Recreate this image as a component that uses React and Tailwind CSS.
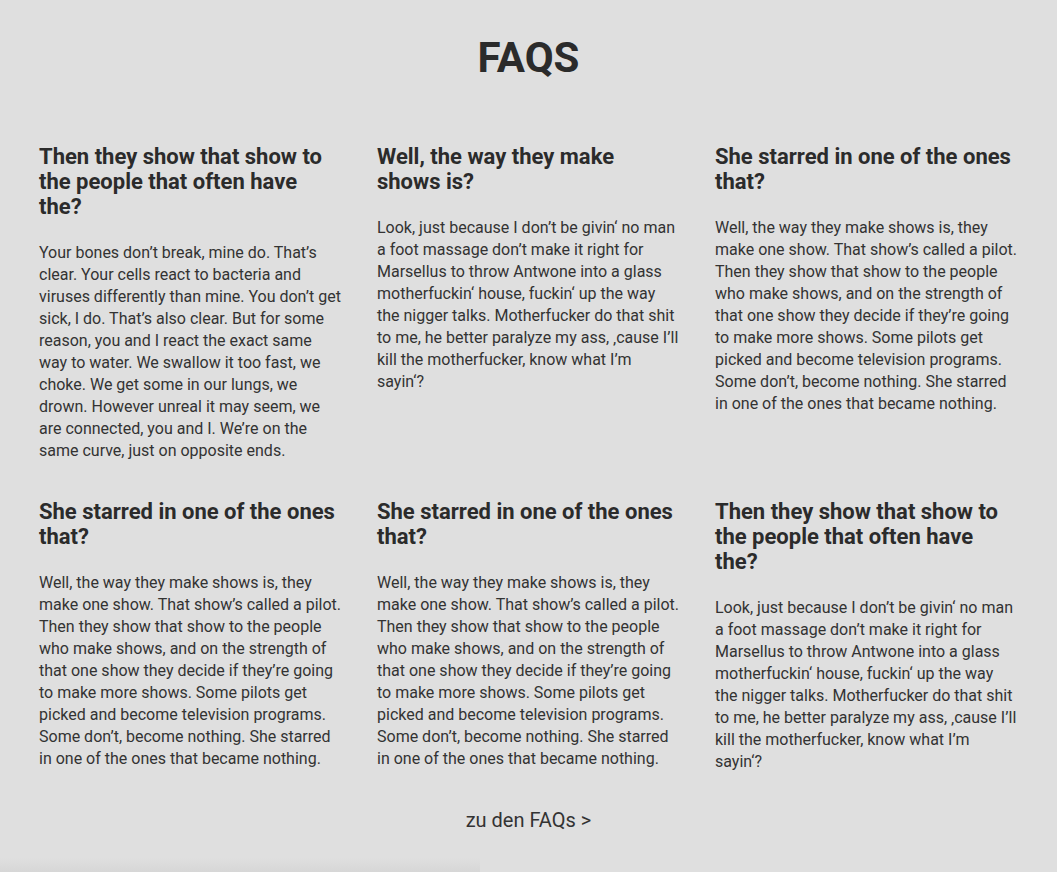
const faqs = [
  {
    q: "Then they show that show to the people that often have the?",
    a: "Your bones don’t break, mine do. That’s clear. Your cells react to bacteria and viruses differently than mine. You don’t get sick, I do. That’s also clear. But for some reason, you and I react the exact same way to water. We swallow it too fast, we choke. We get some in our lungs, we drown. However unreal it may seem, we are connected, you and I. We’re on the same curve, just on opposite ends.",
  },
  {
    q: "Well, the way they make shows is?",
    a: "Look, just because I don’t be givin‘ no man a foot massage don’t make it right for Marsellus to throw Antwone into a glass motherfuckin‘ house, fuckin‘ up the way the nigger talks. Motherfucker do that shit to me, he better paralyze my ass, ‚cause I’ll kill the motherfucker, know what I’m sayin‘?",
  },
  {
    q: "She starred in one of the ones that?",
    a: "Well, the way they make shows is, they make one show. That show’s called a pilot. Then they show that show to the people who make shows, and on the strength of that one show they decide if they’re going to make more shows. Some pilots get picked and become television programs. Some don’t, become nothing. She starred in one of the ones that became nothing.",
  },
  {
    q: "She starred in one of the ones that?",
    a: "Well, the way they make shows is, they make one show. That show’s called a pilot. Then they show that show to the people who make shows, and on the strength of that one show they decide if they’re going to make more shows. Some pilots get picked and become television programs. Some don’t, become nothing. She starred in one of the ones that became nothing.",
  },
  {
    q: "She starred in one of the ones that?",
    a: "Well, the way they make shows is, they make one show. That show’s called a pilot. Then they show that show to the people who make shows, and on the strength of that one show they decide if they’re going to make more shows. Some pilots get picked and become television programs. Some don’t, become nothing. She starred in one of the ones that became nothing.",
  },
  {
    q: "Then they show that show to the people that often have the?",
    a: "Look, just because I don’t be givin‘ no man a foot massage don’t make it right for Marsellus to throw Antwone into a glass motherfuckin‘ house, fuckin‘ up the way the nigger talks. Motherfucker do that shit to me, he better paralyze my ass, ‚cause I’ll kill the motherfucker, know what I’m sayin‘?",
  },
];

export default function App() {
  return (
    <div
      className="relative min-h-[872px] w-full overflow-hidden bg-[#dfdfdf] text-[#2b2b2b]"
      style={{ fontFamily: "Roboto, 'Liberation Sans', sans-serif" }}
    >
      <div className="px-[39px] pt-[31px] pb-[36px]">
        <h1 className="text-center text-[42px] font-bold leading-[54px]">FAQS</h1>
        <div className="mt-[59px] grid grid-cols-3 gap-x-[35px] gap-y-[37px]">
          {faqs.map((f, i) => (
            <div key={i}>
              <h2 className="text-[22px] font-bold leading-[25px] text-[#2b2b2b]">{f.q}</h2>
              <p className="mt-[23px] text-[16px] leading-[22px] text-[#333333]">{f.a}</p>
            </div>
          ))}
        </div>
        <div className="mt-[35px] text-center">
          <a className="text-[20px] leading-[24px] text-[#333333]">zu den FAQs &gt;</a>
        </div>
      </div>
      <div className="pointer-events-none absolute bottom-0 left-0 h-[14px] w-[480px] bg-gradient-to-b from-transparent to-[#d3d3d3]/70" />
    </div>
  );
}
